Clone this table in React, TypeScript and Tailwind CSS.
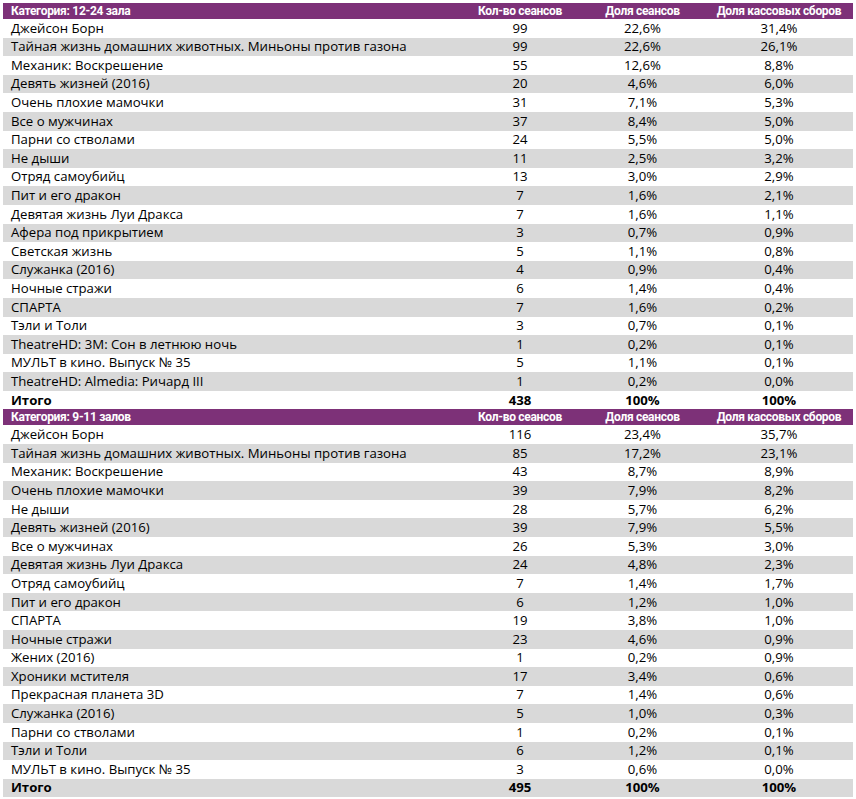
import React from 'react'

type Row = [string, string, string, string]

const big: Row[] = [
  ['Джейсон Борн', '99', '22,6%', '31,4%'],
  ['Тайная жизнь домашних животных. Миньоны против газона', '99', '22,6%', '26,1%'],
  ['Механик: Воскрешение', '55', '12,6%', '8,8%'],
  ['Девять жизней (2016)', '20', '4,6%', '6,0%'],
  ['Очень плохие мамочки', '31', '7,1%', '5,3%'],
  ['Все о мужчинах', '37', '8,4%', '5,0%'],
  ['Парни со стволами', '24', '5,5%', '5,0%'],
  ['Не дыши', '11', '2,5%', '3,2%'],
  ['Отряд самоубийц', '13', '3,0%', '2,9%'],
  ['Пит и его дракон', '7', '1,6%', '2,1%'],
  ['Девятая жизнь Луи Дракса', '7', '1,6%', '1,1%'],
  ['Афера под прикрытием', '3', '0,7%', '0,9%'],
  ['Светская жизнь', '5', '1,1%', '0,8%'],
  ['Служанка (2016)', '4', '0,9%', '0,4%'],
  ['Ночные стражи', '6', '1,4%', '0,4%'],
  ['СПАРТА', '7', '1,6%', '0,2%'],
  ['Тэли и Толи', '3', '0,7%', '0,1%'],
  ['TheatreHD: 3М: Сон в летнюю ночь', '1', '0,2%', '0,1%'],
  ['МУЛЬТ в кино. Выпуск № 35', '5', '1,1%', '0,1%'],
  ['TheatreHD: Almedia: Ричард III', '1', '0,2%', '0,0%'],
]

const small: Row[] = [
  ['Джейсон Борн', '116', '23,4%', '35,7%'],
  ['Тайная жизнь домашних животных. Миньоны против газона', '85', '17,2%', '23,1%'],
  ['Механик: Воскрешение', '43', '8,7%', '8,9%'],
  ['Очень плохие мамочки', '39', '7,9%', '8,2%'],
  ['Не дыши', '28', '5,7%', '6,2%'],
  ['Девять жизней (2016)', '39', '7,9%', '5,5%'],
  ['Все о мужчинах', '26', '5,3%', '3,0%'],
  ['Девятая жизнь Луи Дракса', '24', '4,8%', '2,3%'],
  ['Отряд самоубийц', '7', '1,4%', '1,7%'],
  ['Пит и его дракон', '6', '1,2%', '1,0%'],
  ['СПАРТА', '19', '3,8%', '1,0%'],
  ['Ночные стражи', '23', '4,6%', '0,9%'],
  ['Жених (2016)', '1', '0,2%', '0,9%'],
  ['Хроники мстителя', '17', '3,4%', '0,6%'],
  ['Прекрасная планета 3D', '7', '1,4%', '0,6%'],
  ['Служанка (2016)', '5', '1,0%', '0,3%'],
  ['Парни со стволами', '1', '0,2%', '0,1%'],
  ['Тэли и Толи', '6', '1,2%', '0,1%'],
  ['МУЛЬТ в кино. Выпуск № 35', '3', '0,6%', '0,0%'],
]

function Section({ title, rows, total }: { title: string; rows: Row[]; total: string }) {
  const all: Row[] = [...rows, ['Итого', total, '100%', '100%']]
  return (
    <div>
      <div className="flex h-[16px] items-center bg-[#7d3178] text-[12px] font-bold text-white [font-family:'Liberation_Sans_Narrow','Roboto',sans-serif] tracking-[-0.3px]">
        <div className="flex-1 pl-[8px]">{title}</div>
        <div className="w-[120px] text-center">Кол-во сеансов</div>
        <div className="w-[125px] text-center">Доля сеансов</div>
        <div className="w-[148px] text-center">Доля кассовых сборов</div>
      </div>
      {all.map((r, i) => {
        const last = i === all.length - 1
        return (
          <div
            key={i}
            className={`flex h-[18.6px] items-center text-[13.2px] text-black ${i % 2 === 1 ? 'bg-[#d9d9d9]' : 'bg-white'} ${last ? 'font-bold' : ''}`}
          >
            <div className="flex-1 pl-[8px] whitespace-nowrap">{r[0]}</div>
            <div className="w-[120px] text-center">{r[1]}</div>
            <div className="w-[125px] text-center">{r[2]}</div>
            <div className="w-[148px] text-center">{r[3]}</div>
          </div>
        )
      })}
    </div>
  )
}

export default function App() {
  return (
    <div className="w-[856px] h-[799px] bg-white pl-[3px] pr-[3px] pt-[3px] [font-family:'Open_Sans',sans-serif] leading-none">
      <Section title="Категория: 12-24 зала" rows={big} total="438" />
      <Section title="Категория: 9-11 залов" rows={small} total="495" />
    </div>
  )
}
